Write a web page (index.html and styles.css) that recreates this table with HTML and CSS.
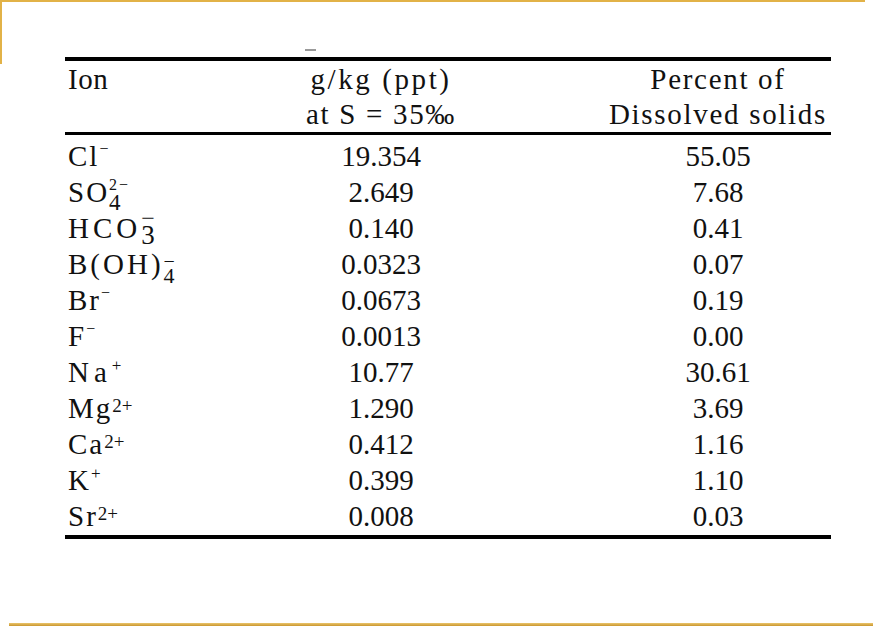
FILE: index.html
```html
<!DOCTYPE html>
<html>
<head>
<meta charset="utf-8">
<link rel="stylesheet" href="styles.css">
</head>
<body>
<div class="slide">
  <div class="frame-top"></div>
  <div class="mark"></div>
  <div class="tbl">
    <div class="head">
      <div class="c1 h-ion">Ion</div>
      <div class="c2"><span class="gk">g/kg (ppt)</span><br>at S = 35‰</div>
      <div class="c3">Percent of<br>Dissolved solids</div>
    </div>
    <div class="rows">
      <div class="row"><div class="c1 ion">Cl<span class="up s-min">−</span></div><div class="c2">19.354</div><div class="c3">55.05</div></div>
      <div class="row"><div class="c1 ion">SO<span class="stack hi-so4">2−</span><span class="up lo-so4">4</span></div><div class="c2">2.649</div><div class="c3">7.68</div></div>
      <div class="row"><div class="c1 ion wide">HCO<span class="stack hi-hco3">−</span><span class="up lo-hco3">3</span></div><div class="c2">0.140</div><div class="c3">0.41</div></div>
      <div class="row"><div class="c1 ion mid">B(OH)<span class="stack hi-boh">−</span><span class="up lo-boh">4</span></div><div class="c2">0.0323</div><div class="c3">0.07</div></div>
      <div class="row"><div class="c1 ion">Br<span class="up s-min">−</span></div><div class="c2">0.0673</div><div class="c3">0.19</div></div>
      <div class="row"><div class="c1 ion">F<span class="up s-min">−</span></div><div class="c2">0.0013</div><div class="c3">0.00</div></div>
      <div class="row"><div class="c1 ion na">Na<span class="up s-plus">+</span></div><div class="c2">10.77</div><div class="c3">30.61</div></div>
      <div class="row"><div class="c1 ion">Mg<span class="up s-two">2+</span></div><div class="c2">1.290</div><div class="c3">3.69</div></div>
      <div class="row"><div class="c1 ion">Ca<span class="up s-two">2+</span></div><div class="c2">0.412</div><div class="c3">1.16</div></div>
      <div class="row"><div class="c1 ion">K<span class="up s-plus">+</span></div><div class="c2">0.399</div><div class="c3">1.10</div></div>
      <div class="row"><div class="c1 ion">Sr<span class="up s-two">2+</span></div><div class="c2">0.008</div><div class="c3">0.03</div></div>
    </div>
  </div>
  <div class="footer-line"></div>
</div>
</body>
</html>
```
FILE: styles.css
```css
html, body {
  margin: 0;
  background: #ffffff;
}

.slide {
  width: 873px;
  height: 626px;
  display: flex;
  flex-direction: column;
  position: relative;
  font-family: "Liberation Serif", "Times New Roman", serif;
  color: #111111;
}

.slide::before {
  content: "";
  position: absolute;
  left: 0;
  top: 0;
  width: 2px;
  height: 64px;
  background: #e2b247;
}

.frame-top {
  flex: none;
  width: 865px;
  height: 2px;
  background: #e2b247;
}

.mark {
  flex: none;
  margin: 47px 0 0 305px;
  width: 11px;
  height: 2px;
  background: #9a9a9a;
}

.tbl {
  flex: none;
  margin: 6px 0 0 65px;
  width: 766px;
  border-top: 4px solid #000;
  border-bottom: 4px solid #000;
  font-size: 29px;
}

.head,
.row {
  display: grid;
  grid-template-columns: 92px 448px 226px;
}

.head {
  padding-top: 1px;
  border-bottom: 3px solid #000;
  line-height: 35px;
  letter-spacing: 1.7px;
}

.h-ion {
  letter-spacing: 0.5px;
}

.gk {
  letter-spacing: 2.6px;
}

.rows {
  padding: 3px 0 1px;
}

.row {
  height: 36px;
  line-height: 36px;
  white-space: nowrap;
}

.c1 {
  padding-left: 3px;
  text-align: left;
}

.c2,
.c3 {
  text-align: center;
}

.ion {
  letter-spacing: 2px;
}

.ion.wide {
  letter-spacing: 4px;
}

.ion.mid {
  letter-spacing: 3px;
}

.ion.na {
  letter-spacing: 5px;
}

.up {
  line-height: 0;
  letter-spacing: 0;
}

.s-min {
  font-size: 16px;
  vertical-align: 12px;
}

.s-plus {
  font-size: 17px;
  vertical-align: 11px;
}

.s-two {
  font-size: 19px;
  vertical-align: 6.5px;
}

.stack {
  display: inline-block;
  width: 0;
  white-space: nowrap;
  line-height: 0;
  letter-spacing: 0;
}

.hi-so4 {
  font-size: 16px;
  letter-spacing: 2px;
  vertical-align: 12px;
}

.lo-so4 {
  font-size: 23px;
  vertical-align: -8px;
}

.hi-hco3 {
  font-size: 24px;
  vertical-align: 12px;
}

.lo-hco3 {
  font-size: 27px;
  vertical-align: -6px;
}

.hi-boh {
  font-size: 20px;
  vertical-align: 6px;
}

.lo-boh {
  font-size: 22px;
  vertical-align: -9px;
}

.footer-line {
  flex: none;
  margin-top: auto;
  margin-left: 9px;
  height: 3px;
  background: linear-gradient(#eac56c, #c9962f);
}
```
